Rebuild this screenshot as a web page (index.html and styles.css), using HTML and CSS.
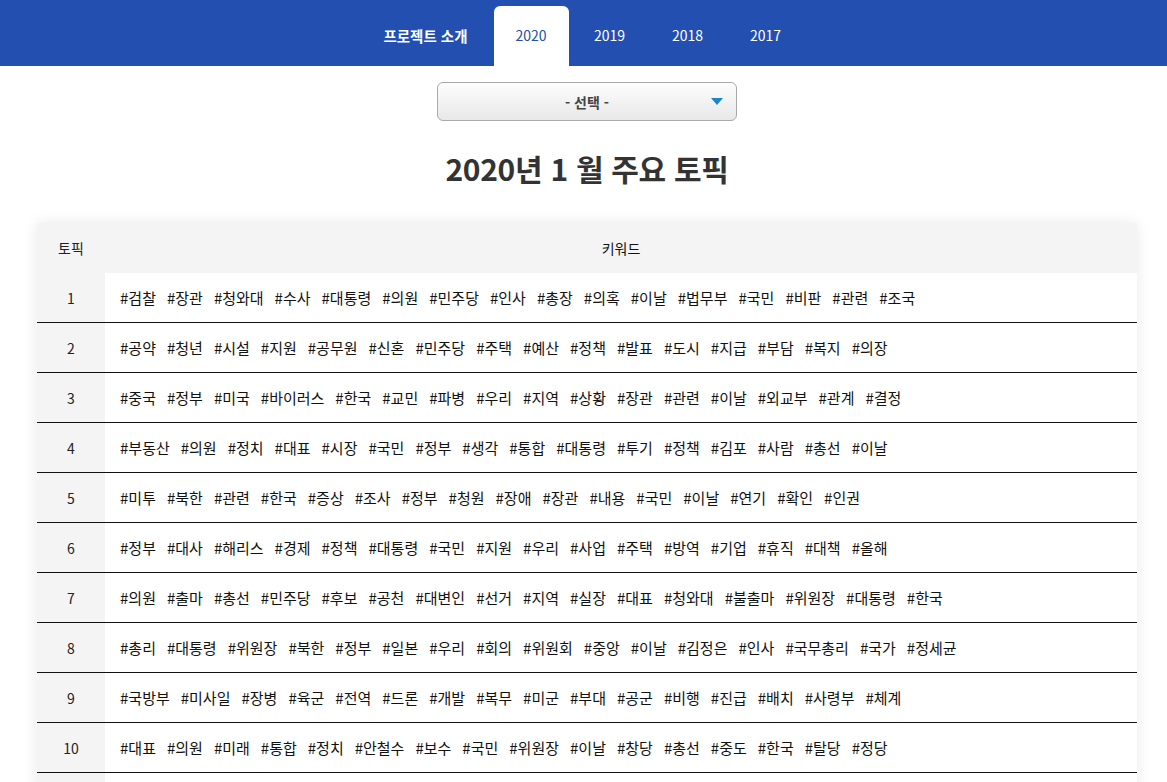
FILE: index.html
```html
<!DOCTYPE html>
<html lang="ko">
<head>
<meta charset="utf-8">
<title>주요 토픽</title>
<link rel="stylesheet" href="styles.css">
</head>
<body>
<header class="topbar">
  <nav class="tabs">
    <a class="tab tab-intro">프로젝트 소개</a>
    <a class="tab tab-active">2020</a>
    <a class="tab">2019</a>
    <a class="tab">2018</a>
    <a class="tab">2017</a>
  </nav>
</header>
<main class="content">
  <div class="select">
    <span class="select-label">- 선택 -</span>
    <svg class="select-arrow" width="12" height="8" viewBox="0 0 12 8"><path d="M0 0 H12 L6 7 Z" fill="#1a86c8"/></svg>
  </div>
  <h1 class="title">2020년 1 월 주요 토픽</h1>
  <div class="table">
    <div class="row head">
      <div class="c-num">토픽</div>
      <div class="c-kw c-kw-head">키워드</div>
    </div>
    <div class="row"><div class="c-num">1</div><div class="c-kw"><span>#검찰</span><span>#장관</span><span>#청와대</span><span>#수사</span><span>#대통령</span><span>#의원</span><span>#민주당</span><span>#인사</span><span>#총장</span><span>#의혹</span><span>#이날</span><span>#법무부</span><span>#국민</span><span>#비판</span><span>#관련</span><span>#조국</span></div></div>
    <div class="row"><div class="c-num">2</div><div class="c-kw"><span>#공약</span><span>#청년</span><span>#시설</span><span>#지원</span><span>#공무원</span><span>#신혼</span><span>#민주당</span><span>#주택</span><span>#예산</span><span>#정책</span><span>#발표</span><span>#도시</span><span>#지급</span><span>#부담</span><span>#복지</span><span>#의장</span></div></div>
    <div class="row"><div class="c-num">3</div><div class="c-kw"><span>#중국</span><span>#정부</span><span>#미국</span><span>#바이러스</span><span>#한국</span><span>#교민</span><span>#파병</span><span>#우리</span><span>#지역</span><span>#상황</span><span>#장관</span><span>#관련</span><span>#이날</span><span>#외교부</span><span>#관계</span><span>#결정</span></div></div>
    <div class="row"><div class="c-num">4</div><div class="c-kw"><span>#부동산</span><span>#의원</span><span>#정치</span><span>#대표</span><span>#시장</span><span>#국민</span><span>#정부</span><span>#생각</span><span>#통합</span><span>#대통령</span><span>#투기</span><span>#정책</span><span>#김포</span><span>#사람</span><span>#총선</span><span>#이날</span></div></div>
    <div class="row"><div class="c-num">5</div><div class="c-kw"><span>#미투</span><span>#북한</span><span>#관련</span><span>#한국</span><span>#증상</span><span>#조사</span><span>#정부</span><span>#청원</span><span>#장애</span><span>#장관</span><span>#내용</span><span>#국민</span><span>#이날</span><span>#연기</span><span>#확인</span><span>#인권</span></div></div>
    <div class="row"><div class="c-num">6</div><div class="c-kw"><span>#정부</span><span>#대사</span><span>#해리스</span><span>#경제</span><span>#정책</span><span>#대통령</span><span>#국민</span><span>#지원</span><span>#우리</span><span>#사업</span><span>#주택</span><span>#방역</span><span>#기업</span><span>#휴직</span><span>#대책</span><span>#올해</span></div></div>
    <div class="row"><div class="c-num">7</div><div class="c-kw"><span>#의원</span><span>#출마</span><span>#총선</span><span>#민주당</span><span>#후보</span><span>#공천</span><span>#대변인</span><span>#선거</span><span>#지역</span><span>#실장</span><span>#대표</span><span>#청와대</span><span>#불출마</span><span>#위원장</span><span>#대통령</span><span>#한국</span></div></div>
    <div class="row"><div class="c-num">8</div><div class="c-kw"><span>#총리</span><span>#대통령</span><span>#위원장</span><span>#북한</span><span>#정부</span><span>#일본</span><span>#우리</span><span>#회의</span><span>#위원회</span><span>#중앙</span><span>#이날</span><span>#김정은</span><span>#인사</span><span>#국무총리</span><span>#국가</span><span>#정세균</span></div></div>
    <div class="row"><div class="c-num">9</div><div class="c-kw"><span>#국방부</span><span>#미사일</span><span>#장병</span><span>#육군</span><span>#전역</span><span>#드론</span><span>#개발</span><span>#복무</span><span>#미군</span><span>#부대</span><span>#공군</span><span>#비행</span><span>#진급</span><span>#배치</span><span>#사령부</span><span>#체계</span></div></div>
    <div class="row"><div class="c-num">10</div><div class="c-kw"><span>#대표</span><span>#의원</span><span>#미래</span><span>#통합</span><span>#정치</span><span>#안철수</span><span>#보수</span><span>#국민</span><span>#위원장</span><span>#이날</span><span>#창당</span><span>#총선</span><span>#중도</span><span>#한국</span><span>#탈당</span><span>#정당</span></div></div>
    <div class="row"><div class="c-num"></div><div class="c-kw"></div></div>
  </div>
</main>
</body>
</html>
```
FILE: styles.css
```css
* { box-sizing: border-box; }
html, body { margin: 0; padding: 0; }
body {
  font-family: "Noto Sans CJK KR", "Noto Sans", sans-serif;
  color: #222;
  background: #fff;
}
.topbar {
  background: #234fb0;
  height: 66px;
  display: flex;
  justify-content: center;
  align-items: flex-end;
  padding-left: 7px;
}
.tabs {
  display: flex;
  align-items: stretch;
  height: 60px;
  margin-left: 14px;
}
.tab {
  display: flex;
  align-items: center;
  justify-content: center;
  width: 78px;
  color: #fff;
  font-size: 14px;
  padding-bottom: 2px;
  text-decoration: none;
}
.tab-intro {
  width: auto;
  font-weight: bold;
  font-size: 14.5px;
  margin-right: 26px;
}
.tab-active {
  width: 75px;
  background: #fff;
  color: #234fb0;
  border-radius: 6px 6px 0 0;
  margin-right: 2px;
}
.content {
  display: flex;
  flex-direction: column;
  align-items: center;
  padding-top: 16px;
  padding-left: 7px;
}
.select {
  position: relative;
  width: 300px;
  height: 39px;
  border: 1px solid #a9a9a9;
  border-radius: 6px;
  background: linear-gradient(#fdfdfd, #e8e8e8);
  display: flex;
  align-items: center;
  justify-content: center;
}
.select-label {
  font-size: 14px;
  font-weight: bold;
  color: #444;
}
.select-arrow {
  position: absolute;
  right: 13px;
  top: 15px;
}
.title {
  margin: 27px 0 0 0;
  font-size: 30px;
  font-weight: bold;
  color: #333;
  letter-spacing: -0.3px;
  line-height: 40px;
}
.table {
  width: 1100px;
  margin-top: 35px;
  box-shadow: 0 0 14px rgba(0,0,0,0.09);
  background: #fff;
}
.row {
  display: flex;
  height: 50px;
  border-bottom: 1px solid #111;
}
.row.head {
  background: #f4f4f4;
  border-bottom: none;
  height: 50px;
}
.c-num {
  width: 68px;
  flex: none;
  background: #f4f4f4;
  display: flex;
  align-items: center;
  justify-content: center;
  font-size: 14px;
  color: #222;
}
.c-kw {
  flex: 1;
  display: flex;
  align-items: center;
  padding-left: 15px;
  gap: 11px;
  font-size: 15px;
  color: #111;
}
.c-kw-head {
  justify-content: center;
  padding-left: 0;
  font-size: 14px;
}
```
